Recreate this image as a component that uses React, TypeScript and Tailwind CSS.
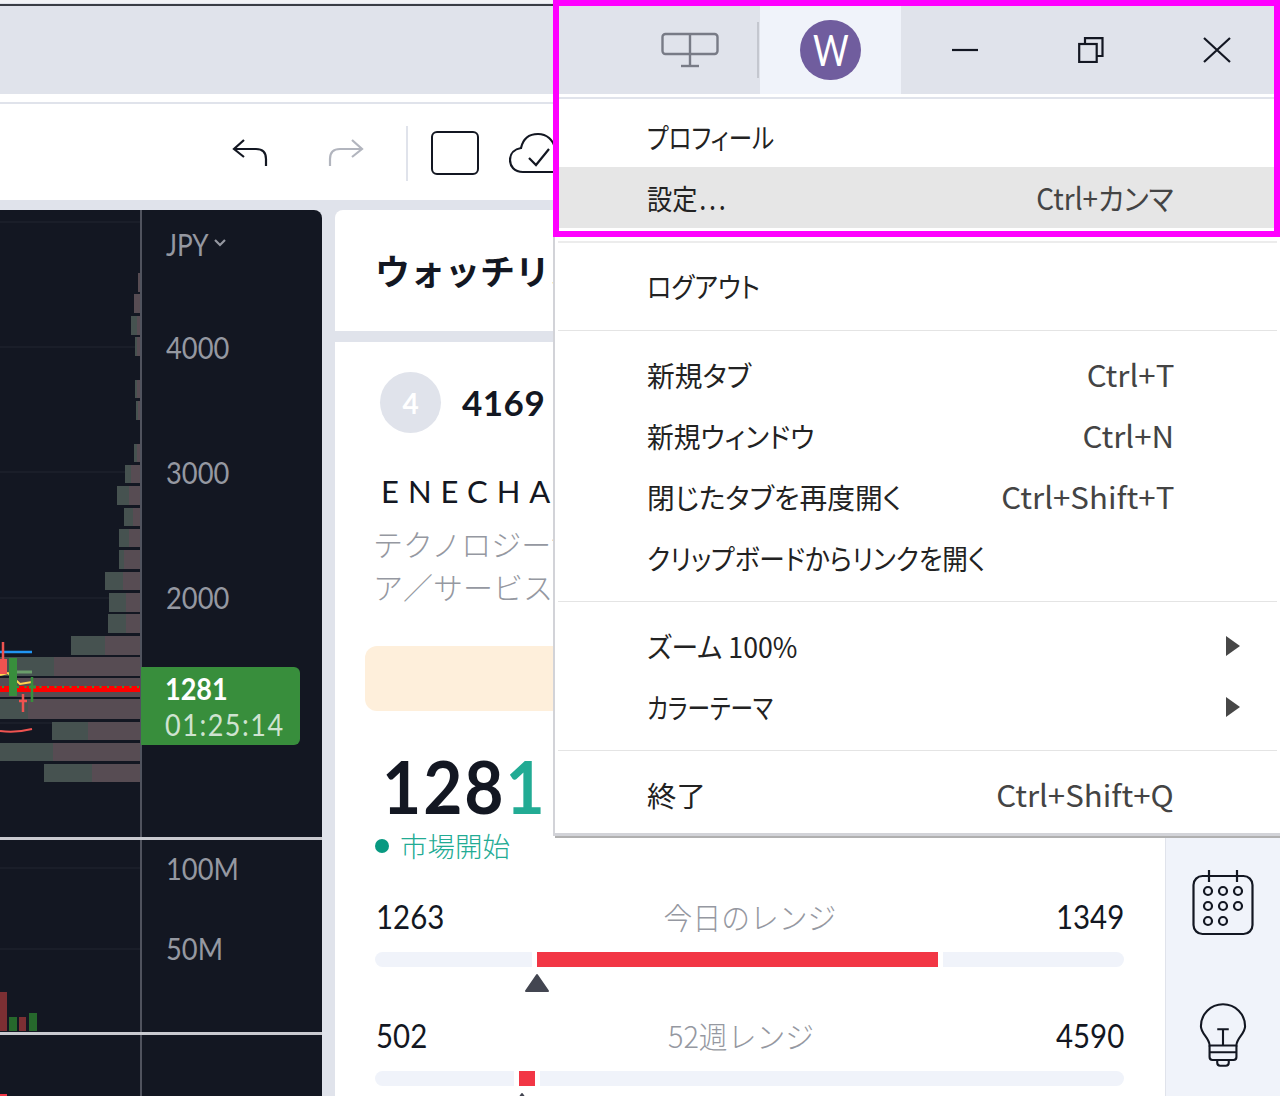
import React from "react";

const JP = "font-['Noto_Sans_CJK_JP',sans-serif]";
const LA = "font-['Lato','Noto_Sans_CJK_JP',sans-serif]";

const profile: [number, number, number, number][] = [
  [273, 19, 138, 138], [294, 19, 134, 134], [316, 19, 131, 137], [337, 19, 135, 137], [380, 18, 135, 137], [401, 19, 136, 138],
  [444, 18, 134, 137], [465, 18, 125, 131], [486, 19, 117, 129], [508, 18, 124, 133], [529, 18, 119, 129], [550, 19, 119, 124],
  [572, 18, 105, 123], [593, 19, 109, 126], [614, 19, 108, 126], [636, 19, 71, 105], [657, 19, 0, 54], [678, 19, 0, 0],
  [699, 20, 0, 28], [722, 18, 52, 88], [743, 18, 0, 53], [764, 18, 44, 92],
];

function Plot() {
  const y = (v: number) => v - 210;
  return (
    <svg width="140" height="627" viewBox="0 0 140 627" className="block shrink-0">
      {[222, 347, 472, 598, 723].map((g) => (
        <line key={g} x1="0" x2="140" y1={y(g)} y2={y(g)} stroke="#1e222d" strokeWidth="1.5" />
      ))}
      {profile.map(([t, h, l, s]) => (
        <g key={t}>
          <rect x={l} y={y(t)} width={s - l} height={h} fill="#465250" />
          <rect x={s} y={y(t)} width={140 - s} height={h} fill="#574c53" />
        </g>
      ))}
      <line x1="0" x2="32" y1={y(652)} y2={y(652)} stroke="#2196f3" strokeWidth="2.5" />
      <path d={`M0 ${y(675)} L8 ${y(673)} L20 ${y(684)} L32 ${y(682)}`} stroke="#ffd54f" strokeWidth="2" fill="none" />
      <line x1="17" x2="32" y1={y(672)} y2={y(672)} stroke="#6a9d6a" strokeWidth="3" />
      <line x1="3" x2="3" y1={y(642)} y2={y(674)} stroke="#ef5350" strokeWidth="2.5" />
      <rect x="0" y={y(659)} width="7" height="15" fill="#ef5350" />
      <rect x="0" y={y(686)} width="140" height="6" fill="#ff0000" />
      <line x1="2" x2="140" y1={y(687)} y2={y(687)} stroke="#388e3c" strokeWidth="2" strokeDasharray="2 5.5" />
      <rect x="9" y={y(658)} width="8" height="38" fill="#388e3c" />
      <line x1="32" x2="32" y1={y(677)} y2={y(702)} stroke="#388e3c" strokeWidth="2.5" />
      <line x1="29" x2="36" y1={y(687)} y2={y(687)} stroke="#388e3c" strokeWidth="3" />
      <line x1="23" x2="23" y1={y(694)} y2={y(712)} stroke="#ef5350" strokeWidth="2.5" />
      <line x1="19" x2="27" y1={y(701)} y2={y(701)} stroke="#ef5350" strokeWidth="2.5" />
      <path d={`M0 ${y(731)} Q16 ${y(733)} 32 ${y(729)}`} stroke="#ef5350" strokeWidth="2" fill="none" />
    </svg>
  );
}

function Axis({ h, label }: { h: string; label: string }) {
  return (
    <div className={`flex items-center pl-[24px] text-[31px] text-[#9598a1] ${LA} ${h}`}>
      <span className="inline-block origin-left scale-x-[.88] whitespace-nowrap">{label}</span>
    </div>
  );
}

function Chart() {
  return (
    <div className="relative w-[322px] shrink-0 overflow-hidden rounded-tr-lg bg-[#131722]">
      <div className="box-content flex h-[627px] border-b-[3px] border-[#c9cad0]">
        <Plot />
        <div className="flex-1 border-l-2 border-[#50535e]">
          <div className="flex h-[75px] items-center pb-[6px] pl-[24px] text-[30px] text-[#9598a1]">
            <span className={`inline-block origin-left scale-x-[.87] whitespace-nowrap ${LA}`}>JPY</span>
            <svg width="14" height="10" viewBox="0 0 14 10" className="-ml-[2px] mt-[-4px]">
              <path d="M2 2 L7 7 L12 2" stroke="#9598a1" strokeWidth="2.2" fill="none" />
            </svg>
          </div>
          <Axis h="h-[125px]" label="4000" />
          <Axis h="h-[125px]" label="3000" />
          <Axis h="h-[125px]" label="2000" />
        </div>
      </div>
      <div className="box-content flex h-[192px] border-b-[3px] border-[#c9cad0]">
        <svg width="140" height="192" viewBox="0 0 140 192" className="block shrink-0">
          <line x1="0" x2="140" y1="28" y2="28" stroke="#1e222d" strokeWidth="1.5" />
          <line x1="0" x2="140" y1="109" y2="109" stroke="#1e222d" strokeWidth="1.5" />
          <rect x="0" y="152" width="7" height="39" fill="#7c2f33" />
          <rect x="9" y="177" width="8" height="14" fill="#26682c" />
          <rect x="19" y="177" width="7" height="14" fill="#7c2f33" />
          <rect x="29" y="173" width="8" height="18" fill="#26682c" />
        </svg>
        <div className="flex-1 border-l-2 border-[#50535e]">
          <Axis h="h-[56px]" label="100M" />
          <Axis h="h-[104px]" label="50M" />
        </div>
      </div>
      <div className="flex h-[64px]">
        <svg width="140" height="64" viewBox="0 0 140 64" className="block shrink-0">
          <rect x="0" y="59" width="7" height="5" fill="#f23645" />
        </svg>
        <div className="flex-1 border-l-2 border-[#50535e]" />
      </div>
      <div className={`absolute left-[141px] top-[457px] flex h-[78px] w-[159px] flex-col justify-center rounded-r-md bg-[#388e3c] pl-[24px] text-[30px] leading-[36px] ${LA}`}>
        <span className="inline-block origin-left scale-x-[.9] whitespace-nowrap font-bold text-white">1281</span>
        <span className="inline-block origin-left scale-x-[.9] whitespace-nowrap tracking-[1.7px] text-[#cfe3d0]">01:25:14</span>
      </div>
    </div>
  );
}

function Track({ redL, redW, tri }: { redL: string; redW: string; tri: string }) {
  return (
    <div className="relative mx-[40px] h-[15px] w-[749px] rounded-full bg-[#f0f3fa]">
      <div className={`absolute top-0 box-content h-[15px] border-x-[5px] border-white bg-[#f23645] ${redL} ${redW}`} />
      <svg width="28" height="20" viewBox="0 0 28 20" className={`absolute top-[21px] ${tri}`}>
        <path d="M14 2 L25 18 H3 Z" fill="#434651" stroke="#434651" strokeWidth="2" strokeLinejoin="round" />
      </svg>
    </div>
  );
}

function RangeRow({ a, label, b, mt }: { a: string; label: string; b: string; mt: string }) {
  return (
    <div className={`flex h-[36px] items-center justify-between px-[41px] text-[32px] text-[#131722] ${LA} ${mt}`}>
      <span className="inline-block origin-left scale-x-[.92] whitespace-nowrap">{a}</span>
      <span className={`mb-[2px] inline-block scale-x-[.96] whitespace-nowrap text-[30px] font-light text-[#9598a1] ${JP}`}>{label}</span>
      <span className="inline-block origin-right scale-x-[.92] whitespace-nowrap">{b}</span>
    </div>
  );
}

function Watch() {
  return (
    <div className="flex w-[830px] shrink-0 flex-col gap-[11px]">
      <div className={`flex h-[121px] items-center rounded-t-lg bg-white pl-[40px] text-[35px] font-bold text-[#131722] ${JP}`}>
        <span className="whitespace-nowrap">ウォッチリスト</span>
      </div>
      <div className="flex-1 bg-white">
        <div className="ml-[45px] mt-[30px] flex h-[61px] items-center">
          <div className={`flex h-[61px] w-[61px] items-center justify-center rounded-full bg-[#e0e3eb] text-[28px] font-bold text-white ${LA}`}>4</div>
          <span className={`ml-[21px] text-[35px] font-bold tracking-[.5px] text-[#131722] ${LA}`}>4169</span>
        </div>
        <div className={`ml-[46px] mt-[39px] flex h-[40px] items-center whitespace-nowrap pb-[2px] text-[31px] tracking-[9px] text-[#131722] ${LA}`}>ENECHANGE</div>
        <div className={`ml-[38px] mt-[10px] whitespace-nowrap text-[30px] font-light leading-[43px] text-[#9598a1] ${JP}`}>
          テクノロジーサービス
          <br />
          ア／サービス
        </div>
        <div className="ml-[30px] mt-[38px] h-[65px] w-[500px] rounded-xl bg-[#feefdb]" />
        <div className={`ml-[47px] mt-[35px] flex h-[80px] items-center text-[72px] font-bold leading-none tracking-[2px] text-[#131722] ${LA}`}>
          <span className="inline-block origin-left scale-x-[.94] whitespace-nowrap">
            128<span className="text-[#22ab94]">1</span>
          </span>
        </div>
        <div className={`ml-[40px] mt-[5px] flex h-[30px] items-center text-[27.5px] leading-[30px] text-[#22ab94] ${JP}`}>
          <span className="mr-[11px] h-[14px] w-[14px] rounded-full bg-[#089981]" />
          <span className="mb-[2px] font-light">市場開始</span>
        </div>
        <RangeRow a="1263" label="今日のレンジ" b="1349" mt="mt-[38px]" />
        <div className="mt-[17px]">
          <Track redL="left-[157px]" redW="w-[401px]" tri="left-[148px]" />
        </div>
        <RangeRow a="502" label="52週レンジ" b="4590" mt="mt-[51px]" />
        <div className="mt-[17px]">
          <Track redL="left-[139px]" redW="w-[16px]" tri="left-[133px]" />
        </div>
      </div>
    </div>
  );
}

function Side() {
  return (
    <div className="flex flex-1 flex-col items-center border-l border-[#e0e3eb] bg-[#f0f3fa] pt-[660px]">
      <svg width="62" height="66" viewBox="0 0 62 66" fill="none" stroke="#131722" strokeWidth="2.2">
        <rect x="1.5" y="6" width="59" height="58" rx="9" />
        <line x1="17" y1="0" x2="17" y2="12" />
        <line x1="45" y1="0" x2="45" y2="12" />
        {[16, 31, 46].map((x) => (
          <React.Fragment key={x}>
            <circle cx={x} cy="21" r="4" />
            <circle cx={x} cy="36" r="4" />
          </React.Fragment>
        ))}
        <circle cx="16" cy="51" r="4" />
        <circle cx="31" cy="51" r="4" />
      </svg>
      <svg width="48" height="66" viewBox="0 0 50 66" fill="none" stroke="#131722" strokeWidth="2.2" className="mt-[66px]">
        <path d="M11 44 C11 36 2 32 2 24 C2 11 12 1 25 1 C38 1 48 11 48 24 C48 32 39 36 39 44 Z" />
        <path d="M19 27 H31 M25 27 V44" />
        <path d="M11 44 V56 Q11 59 14 59 H36 Q39 59 39 56 V44 M11 51 H39" />
        <path d="M19 59 V62 Q19 65 22 65 H28 Q31 65 31 62 V59" />
      </svg>
    </div>
  );
}

function Item({ label, sc, arrow, active, scale, scScale }: { label: React.ReactNode; sc?: string; arrow?: boolean; active?: boolean; scale: string; scScale?: string }) {
  return (
    <div className={`flex h-[61px] items-center pl-[92px] text-[28px] ${JP} ${active ? "bg-[#e6e6e6]" : ""}`}>
      <span className={`inline-block origin-left whitespace-nowrap font-normal text-[#222222] [font-feature-settings:'palt'] ${scale}`}>{label}</span>
      <span className="flex-1" />
      {sc && <span className={`mr-[106px] inline-block origin-right whitespace-nowrap text-[30px] font-normal text-[#444444] [font-feature-settings:'palt'] ${scScale ?? "scale-x-[1.04]"}`}>{sc}</span>}
      {arrow && (
        <svg width="14" height="20" viewBox="0 0 14 20" className="mr-[40px]">
          <path d="M0 0 L14 10 L0 20 Z" fill="#474747" />
        </svg>
      )}
    </div>
  );
}

function Menu() {
  return (
    <div className="absolute left-[553px] top-[94px] w-[727px] border-b-[3px] border-l-2 border-[#d2d3d8] bg-white shadow-[2px_2px_0_#b0b0b0]">
      <div className="h-[3px]" />
      <div className="h-[2px] bg-[#e0e3eb]" />
      <div className="pb-[13px] pt-[7px]">
        <Item label="プロフィール" scale="scale-x-[.84]" />
        <Item label={<>設定<span className="ml-[2px] tracking-[3px]">...</span></>} sc="Ctrl+カンマ" scale="scale-x-[.9]" scScale="scale-x-[.93]" active />
      </div>
      <div className="ml-[3px] mr-[3px] border-t-2 border-[#ececec]" />
      <div className="pb-[14px] pt-[12px]">
        <Item label="ログアウト" scale="scale-x-[.9]" />
      </div>
      <div className="ml-[3px] mr-[3px] border-t border-[#e4e4e4]" />
      <div className="pb-[13px] pt-[13px]">
        <Item label="新規タブ" sc="Ctrl+T" scale="scale-x-[.99]" />
        <Item label="新規ウィンドウ" sc="Ctrl+N" scale="scale-x-[.955]" />
        <Item label="閉じたタブを再度開く" sc="Ctrl+Shift+T" scale="scale-x-[.99]" />
        <Item label="クリップボードからリンクを開く" scale="scale-x-[.915]" />
      </div>
      <div className="ml-[3px] mr-[3px] border-t border-[#e4e4e4]" />
      <div className="pb-[13px] pt-[13px]">
        <Item label="ズーム 100%" arrow scale="scale-x-[.955]" />
        <Item label="カラーテーマ" arrow scale="scale-x-[.81]" />
      </div>
      <div className="ml-[3px] mr-[3px] border-t border-[#e4e4e4]" />
      <div className="pb-[8px] pt-[13px]">
        <Item label="終了" sc="Ctrl+Shift+Q" scale="scale-x-[1.05]" />
      </div>
    </div>
  );
}

function TitleBar() {
  return (
    <div className="flex h-[88px] shrink-0 items-stretch justify-end bg-[#e0e3eb]">
      <div className="flex w-[100px] items-center pl-[4px]">
        <svg width="58" height="36" viewBox="0 0 58 36" fill="none" stroke="#787b86" strokeWidth="2.4" className="mt-[-1px]">
          <rect x="1.5" y="2" width="55" height="20" rx="3" />
          <line x1="29" y1="2" x2="29" y2="34" />
          <line x1="20" y1="34" x2="38" y2="34" />
        </svg>
      </div>
      <div className="mr-[1px] mt-[16px] h-[56px] w-[2px] bg-[#c4c7cf]" />
      <div className="flex w-[141px] items-center justify-center bg-[#f0f3fa]">
        <div className="flex h-[60px] w-[61px] items-center justify-center rounded-full bg-[#705d9e] font-['Lato',sans-serif] text-[42px] text-white">
          <span className="inline-block scale-x-[.82]">W</span>
        </div>
      </div>
      <div className="flex w-[127px] items-center justify-center">
        <svg width="26" height="4" viewBox="0 0 26 4"><line x1="0" x2="26" y1="2" y2="2" stroke="#131722" strokeWidth="2.2" /></svg>
      </div>
      <div className="flex w-[126px] items-center justify-center">
        <svg width="26" height="26" viewBox="0 0 26 26" fill="none" stroke="#131722" strokeWidth="2.2">
          <rect x="1.2" y="7" width="17.5" height="18" />
          <path d="M7 7 V1.2 H24.5 V19 H18.7" />
        </svg>
      </div>
      <div className="flex w-[126px] items-center justify-center">
        <svg width="28" height="26" viewBox="0 0 28 26" fill="none" stroke="#131722" strokeWidth="2.2">
          <path d="M1 1 L27 25 M27 1 L1 25" />
        </svg>
      </div>
    </div>
  );
}

function ToolBar() {
  return (
    <div className="flex h-[106px] shrink-0 flex-col bg-white">
      <div className="h-[8px]" />
      <div className="h-[2px] bg-[#e0e3eb]" />
      <div className="flex flex-1 items-center pl-[232px] pt-[2px]">
        <svg width="36" height="28" viewBox="0 0 36 28" fill="none" stroke="#131722" strokeWidth="2.2">
          <path d="M12 1 L2 10 L12 18 M2 10 H24 Q34 10 34 20 V27" />
        </svg>
        <svg width="36" height="28" viewBox="0 0 36 28" fill="none" stroke="#b2b5be" strokeWidth="2.2" className="ml-[60px]">
          <path d="M24 1 L34 10 L24 18 M34 10 H12 Q2 10 2 20 V27" />
        </svg>
        <div className="ml-[42px] h-[55px] w-[2px] bg-[#e0e3eb]" />
        <div className="ml-[23px] h-[44px] w-[48px] rounded-[6px] border-2 border-[#131722]" />
        <svg width="60" height="42" viewBox="0 0 60 42" fill="none" stroke="#131722" strokeWidth="2.2" className="ml-[30px]">
          <path d="M14 40 C5 40 1 34 1 28 C1 21 6 17 12 16 C14 7 20 2 29 2 C38 2 44 8 46 16 C53 17 58 22 58 28 C58 35 53 40 46 40 Z" />
          <path d="M20 26 L27 33 L40 17" />
        </svg>
      </div>
    </div>
  );
}

export default function App() {
  return (
    <div className="relative flex h-[1096px] w-[1280px] flex-col overflow-hidden bg-[#e0e3eb]">
      <div className="box-border h-[6px] shrink-0 border-b-2 border-t-[3px] border-b-[#3a3d45] border-t-[#f2f3f6]" />
      <TitleBar />
      <ToolBar />
      <div className="mt-[10px] flex min-h-0 flex-1 gap-[13px]">
        <Chart />
        <div className="flex flex-1">
          <Watch />
          <Side />
        </div>
      </div>
      <Menu />
      <div className="pointer-events-none absolute left-[553px] top-0 h-[237px] w-[727px] border-[6px] border-[#ff00ff]" />
    </div>
  );
}
